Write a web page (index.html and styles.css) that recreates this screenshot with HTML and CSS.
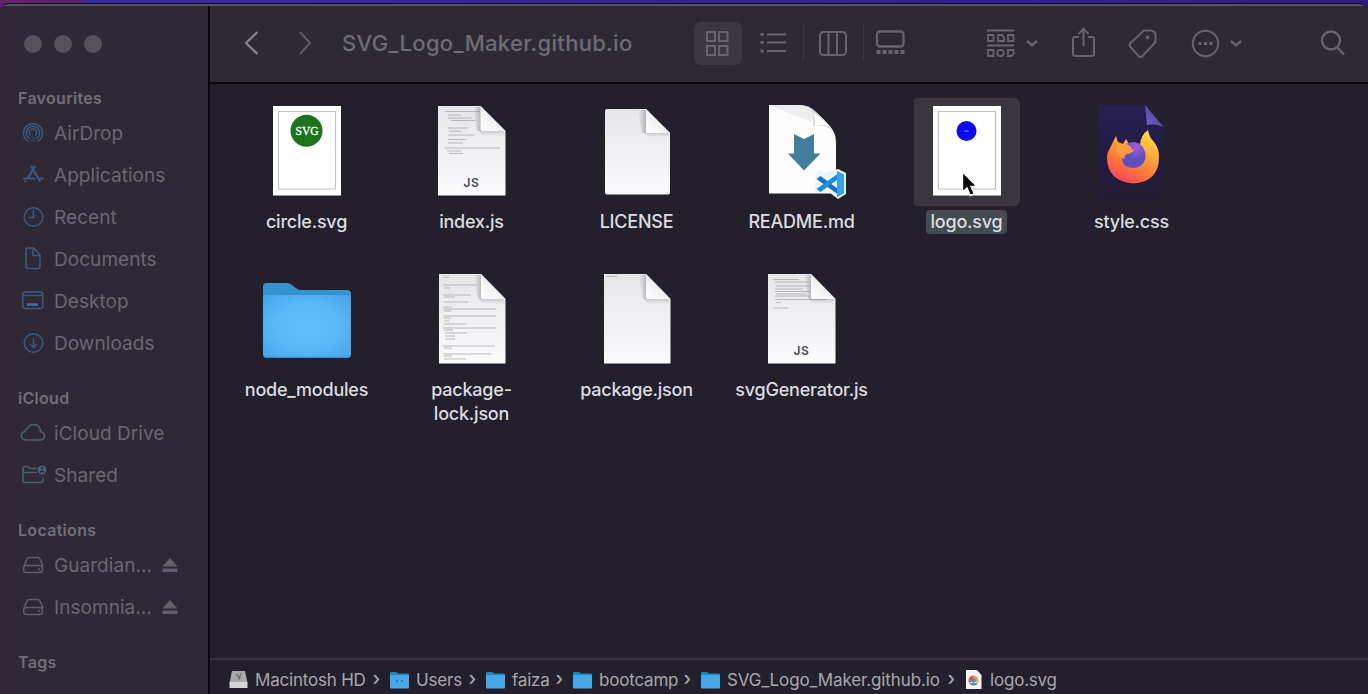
FILE: index.html
```html
<!DOCTYPE html>
<html lang="en">
<head>
<meta charset="utf-8">
<title>SVG_Logo_Maker.github.io</title>
<link rel="stylesheet" href="styles.css">
</head>
<body>
<svg class="defs" width="0" height="0" aria-hidden="true">
  <defs>
    <linearGradient id="paper" x1="0" y1="0" x2="0" y2="1"><stop offset="0" stop-color="#e6e5e9"/><stop offset=".5" stop-color="#f0f0f2"/><stop offset="1" stop-color="#fbfbfd"/></linearGradient>
    <linearGradient id="curl" x1="0" y1="1" x2=".7" y2=".3"><stop offset="0" stop-color="#fff"/><stop offset="1" stop-color="#eae9ec"/></linearGradient>
    <linearGradient id="curlShade" x1="1" y1="0" x2="0" y2="0"><stop offset="0" stop-color="#77757c" stop-opacity=".8"/><stop offset="1" stop-color="#8d8b92" stop-opacity="0"/></linearGradient>
    <linearGradient id="curlBelow" x1="0" y1="0" x2="0" y2="1"><stop offset="0" stop-color="#77757c" stop-opacity=".6"/><stop offset="1" stop-color="#8d8b92" stop-opacity="0"/></linearGradient>
    <radialGradient id="folderFront" r=".7"><stop offset="0" stop-color="#62bffb"/><stop offset=".55" stop-color="#59b8f7"/><stop offset="1" stop-color="#43a3e5"/></radialGradient>
    <linearGradient id="fox" x1=".8" y1="0" x2=".3" y2="1"><stop offset="0" stop-color="#ffe14d"/><stop offset=".4" stop-color="#ffa436"/><stop offset=".75" stop-color="#ff6b3d"/><stop offset="1" stop-color="#f6406a"/></linearGradient>
    <radialGradient id="globe" cx=".6" cy=".2"><stop offset="0" stop-color="#a35be0"/><stop offset="1" stop-color="#5c50bd"/></radialGradient>
    <linearGradient id="night" x1="0" y1="0" x2="0" y2="1"><stop offset="0" stop-color="#262052"/><stop offset=".55" stop-color="#231b46"/><stop offset="1" stop-color="#221d2e"/></linearGradient>
    <linearGradient id="flap" x1="0" y1="1" x2="1" y2="0"><stop offset="0" stop-color="#7567cc"/><stop offset="1" stop-color="#41368a"/></linearGradient>
    <symbol id="mini" viewBox="0 0 19 17"><path d="M0 1.500Q0 .5 1.500.5H6l2 1.500h9.500Q19 2 19 3v5H0z" fill="#2385bf"/><rect y="3.500" width="19" height="13.500" rx="1" fill="#46a9e6"/></symbol>
    <symbol id="drive" viewBox="22 555 22 20"><path d="M24 566l3-7q.5-1.500 2.500-1.500h8q2 0 2.500 1.500l3 7M26.500 565.500h13q3 0 3 3.500t-3 3.500h-13q-3 0-3-3.500t3-3.500z"/><path d="M38 569h2"/></symbol>
    <symbol id="eject" viewBox="0 0 16 15"><path d="M8 0l7.500 8.500H.5zM.5 10.500h15v3.500H.5z"/></symbol>
  </defs>
</svg>
<div class="window">
  <aside class="sidebar">
    <div class="lights"><i></i><i></i><i></i></div>
    <section class="group favourites">
      <h2>Favourites</h2>
      <a class="item"><svg viewBox="21 121 24 24"><path d="M28.500 141.500a9.500 9.500 0 1 1 9 0M29.500 138.500a6.600 6.600 0 1 1 7 0M31 135.500a3.600 3.600 0 1 1 4 0"/><path d="M33 133l-3.500 9h7z" class="solid"/></svg><span>AirDrop</span></a>
      <a class="item"><svg viewBox="21 163 24 24"><path d="M31 166l9.500 16M35 166l-7.500 13M25 182l.8-1.500M23 178.500h12M39 178.500h4.500" stroke-width="2.200"/></svg><span>Applications</span></a>
      <a class="item"><svg viewBox="21 205 24 24"><circle cx="33.500" cy="217" r="9.300"/><path d="M33.500 210v7.500H28.500"/></svg><span>Recent</span></a>
      <a class="item"><svg viewBox="21 247 24 24"><path d="M26 250q0-2 2-2h5.500l6.500 7v11.500q0 2-2 2H28q-2 0-2-2zM33 248v7.500h7"/></svg><span>Documents</span></a>
      <a class="item"><svg viewBox="21 289 24 24"><rect x="22.800" y="292" width="20" height="16.500" rx="2.500"/><path d="M23 295.500h19.500"/><path d="M27 304.500h11" class="bright" stroke-width="2.500"/></svg><span>Desktop</span></a>
      <a class="item"><svg viewBox="21 331 24 24"><circle cx="33.500" cy="343" r="9.300"/><path d="M33.500 338v9.500M30 344l3.500 3.500 3.500-3.500"/></svg><span>Downloads</span></a>
    </section>
    <section class="group">
      <h2>iCloud</h2>
      <a class="item teal"><svg class="wide" viewBox="20 421 26 24"><path d="M26 440h14.500q4-.5 4-4t-4-4.500q0-6-6-7-5.500-.5-7 4-2.500.5-2.500 3-4 .8-3.700 4.500.3 3.500 4.700 4z"/></svg><span>iCloud Drive</span></a>
      <a class="item teal"><svg class="wide" viewBox="20 463 26 24"><path d="M37 468.500h-7l-2-2h-3q-2 0-2 2v12q0 2 2 2h16q2 0 2-2v-3M23 472.500h14"/><circle cx="42" cy="470" r="4.500" class="head"/><path d="M42 467v2.500M40 472.500q2-3 4 0" class="face"/></svg><span>Shared</span></a>
    </section>
    <section class="group">
      <h2>Locations</h2>
      <a class="item grey"><svg viewBox="0 0 24 24"><use href="#drive" x="1" y="2" width="22" height="20"/></svg><span class="drive-name">Guardian...</span><svg class="eject"><use href="#eject"/></svg></a>
      <a class="item grey"><svg viewBox="0 0 24 24"><use href="#drive" x="1" y="2" width="22" height="20"/></svg><span class="drive-name">Insomnia...</span><svg class="eject"><use href="#eject"/></svg></a>
    </section>
    <section class="group"><h2>Tags</h2></section>
  </aside>

  <main class="main">
    <header class="toolbar">
      <svg class="back" viewBox="243 25 18 36"><path d="M257.500 32L246 43l11.500 11"/></svg>
      <svg class="forward" viewBox="297 25 18 36"><path d="M300 32l10 11-10 11"/></svg>
      <h1>SVG_Logo_Maker.github.io</h1>
      <div class="view-active"><svg viewBox="704 25 28 36"><path d="M707 32h8v9h-8zM719 32h8.500v9H719zM707 46h8v9h-8zM719 46h8.500v9H719z"/></svg></div>
      <svg class="list" viewBox="758 25 30 36"><path d="M767 34.500h19M767 42.500h19M767 51h19" stroke-width="2.200"/><path d="M760.500 34.500h3M760.500 42.500h3M760.500 51h3" stroke-width="3"/></svg>
      <i class="sep"></i>
      <svg class="columns" viewBox="817 25 32 36"><rect x="820" y="32" width="26" height="23" rx="3.500"/><path d="M828.500 32v23M837 32v23"/></svg>
      <i class="sep"></i>
      <svg class="gallery" viewBox="874 25 33 36"><rect x="877" y="31.500" width="26.500" height="15" rx="3" stroke-width="2.300"/><path d="M876.500 52h28" stroke-width="4" stroke-dasharray="4 2"/></svg>
      <svg class="arrange" viewBox="985 25 32 36"><path d="M987 30.500h27M987 45.500h27"/><path d="M988 35h5.500v6H988zM998 35h4l2 2v4h-6zM1008 35h5.500v6h-5.500zM988 50h5.500v6H988zM1008 50h5.500v4l-2 2h-3.500z"/><circle cx="1000.500" cy="53" r="3.200"/></svg>
      <svg class="chev" viewBox="1024 25 16 36"><path d="M1027 41l5 4.500 5-4.500"/></svg>
      <svg class="share" viewBox="1070 25 27 36"><path d="M1079 37h-4q-2 0-2 2v15q0 2 2 2h17q2 0 2-2V39q0-2-2-2h-4M1083.500 46V30M1078.500 34l5-5 5 5"/></svg>
      <svg class="tag" viewBox="1126 25 33 36"><path d="M1144 30.500h7q4.500 1 4.500 5v6.500l-13 14q-2 2-4 0l-8-9q-2-2 0-4z"/><circle cx="1147.500" cy="37.500" r="1" /></svg>
      <svg class="more" viewBox="1190 25 32 36"><circle cx="1205.500" cy="43.500" r="12.700"/><path d="M1198.500 43.500h3M1204 43.500h3M1209.500 43.500h3" stroke-width="3"/></svg>
      <svg class="chev chev-more" viewBox="1228 25 16 36"><path d="M1231 41l5 4.500 5-4.500"/></svg>
      <svg class="search" viewBox="1319 25 28 36"><circle cx="1331" cy="40.500" r="9"/><path d="M1337.500 47.500l6.500 7" stroke-width="2.500"/></svg>
    </header>

    <div class="files">
      <figure class="file">
        <svg viewBox="0 0 108 108"><path d="M21 8h68v89.500H21z" fill="#fff"/><path d="M26.500 13.500h57v77.500h-57z" fill="none" stroke="#c6c5c9" stroke-width="1.200"/><circle cx="54.500" cy="32.700" r="16" fill="#1e741e"/><text x="55" y="37" class="svg-badge">SVG</text></svg>
        <figcaption>circle.svg</figcaption>
      </figure>
      <figure class="file">
        <svg viewBox="0 0 108 108"><path d="M21 8h42.500l25 25v64.500H21z" fill="url(#paper)"/><path d="M28 13.500h35M31 17h13M31 20h24M34 22.500h24M31 30h20M32 33h12M31 37h26M31 41.500h18M31 45h15" class="code"/><path d="M28 50h55M30 53h14M32 55.500h14" class="code"/><path d="M56 9h8v24h-4z" fill="url(#curlShade)" opacity=".6"/><path d="M62 33h25v5H66z" fill="url(#curlBelow)" opacity=".5"/><path d="M63.500 8l25 25H66q-2.500 0-2.500-2.500z" fill="url(#curl)"/><text x="54.500" y="89" class="js">JS</text></svg>
        <figcaption>index.js</figcaption>
      </figure>
      <figure class="file">
        <svg viewBox="0 0 108 108"><path d="M25 11h39l24 24v59.500q0 2-2 2H25q-2 0-2-2v-81.500q0-2 2-2z" fill="url(#paper)"/><path d="M56 12h8v23h-4z" fill="url(#curlShade)" opacity=".6"/><path d="M62 35h25v4H66z" fill="url(#curlBelow)" opacity=".5"/><path d="M64 11l24 24H66q-2 0-2-2z" fill="url(#curl)"/></svg>
        <figcaption>LICENSE</figcaption>
      </figure>
      <figure class="file">
        <svg viewBox="0 0 108 108"><path d="M22 7h30q10 0 17 7l12 12q8 8 8 18v51.500H22z" fill="#fcfcfd"/><path d="M22 7h30q10 0 15 6l-2 11z" fill="#e7e7ea" opacity=".7"/><path d="M62 9q6 7 4 19 14-2 20 6-8-14-24-25z" fill="#d9d8dc"/><path d="M65 14q4 5 3 14 6-2 14 0-6-7-17-14z" fill="#fff"/><path d="M47 36l10 5 10-5v19.500h6.500L57 72.500 41 55.500h6z" fill="#427f9e"/><path d="M91 71l8 4v21l-8 5-13-10-5 4-5-4v-5l3-3-3-3v-4l5-4 5 3z" fill="#e9f4fb"/><path d="M69.500 81l4-3 19 14v5.500z" fill="#1474bd"/><path d="M69.500 91l4 3 19-14v-5.500z" fill="#1c8bdb"/><path d="M90 73l7 3.500v19L90 99z" fill="#37a1ef"/></svg>
        <figcaption>README.md</figcaption>
      </figure>
      <figure class="file selected">
        <svg viewBox="0 0 108 108"><path d="M21 8h68v89.500H21z" fill="#fff"/><path d="M26.500 13.500h57v77.500h-57z" fill="none" stroke="#c2c1ca" stroke-width="1.200"/><circle cx="54.500" cy="33" r="10" fill="#0a0af5"/><path d="M52.500 33h4" stroke="#6b6bff" stroke-width="1.500"/><path d="M50.500 74v20l4.500-4 3.300 7.500 4-1.800-3.300-7.200h6z" fill="#050505" stroke="#fff" stroke-width="1.400"/></svg>
        <figcaption><span>logo.svg</span></figcaption>
      </figure>
      <figure class="file">
        <svg viewBox="0 0 108 108"><path d="M22 7h46l18 21v77H22z" fill="url(#night)"/><path d="M68 7l18.500 22Q78 25 70 27z" fill="url(#flap)"/><path d="M32 52l3-6 4-8 2 6 5 2 3-5 3 5 6-1 5 1q1-9 8-14 1 7 6 12 5 6 5 15 0 25-26 26.500Q30 83 30 59q0-4 2-7z" fill="url(#fox)"/><path d="M49 46q9-5 16 2 5 6 3 14-3 8-12 8t-11-8q-1-5 2-8 5 0 8-3-2-4-6-5z" fill="url(#globe)"/><path d="M38 50q6-4 11-3 3 4 8 5-2 3-7 4-4 2-2 5-6-1-10-11z" fill="#ff9a3c"/></svg>
        <figcaption>style.css</figcaption>
      </figure>
      <figure class="file">
        <svg viewBox="0 0 108 108"><path d="M11 21q0-4 4-4h20q3 0 5 2l4 3q2 2 5 2h46q4 0 4 4v20H11z" fill="#3492cf"/><path d="M11 32q0-3 4-3h80q4 0 4 3v56q0 4-4 4H15q-4 0-4-4z" fill="url(#folderFront)"/><path d="M13 91.300h84" stroke="#3590cf" stroke-width="1.300"/></svg>
        <figcaption>node_modules</figcaption>
      </figure>
      <figure class="file">
        <svg viewBox="0 0 108 108"><path d="M22 8h42l24.500 25v64.500H22z" fill="url(#paper)"/><path d="M26 11h6M26 19h34M27 22h6M26 29h28M27 31h11M27 36h24M26 41h9M27 43h52M27 45h7M26 50h53M27 52h7M27 55h5M27 58h22M26 62h53M27 64h9M28 67h22M28 70h10M28 73h10M26 80h52M27 82h8M26 88h48M27 90h8M27 93h22" class="code"/><path d="M57 9h8v24h-4z" fill="url(#curlShade)" opacity=".6"/><path d="M62 33h25v5H66z" fill="url(#curlBelow)" opacity=".5"/><path d="M64 8l24.500 25H66q-2 0-2-2z" fill="url(#curl)"/></svg>
        <figcaption>package-<br>lock.json</figcaption>
      </figure>
      <figure class="file">
        <svg viewBox="0 0 108 108"><path d="M22 8h42l24.500 25v64.500H22z" fill="url(#paper)"/><path d="M24 10.500h11" class="code"/><path d="M57 9h8v24h-4z" fill="url(#curlShade)" opacity=".6"/><path d="M62 33h25v5H66z" fill="url(#curlBelow)" opacity=".5"/><path d="M64 8l24.500 25H66q-2 0-2-2z" fill="url(#curl)"/></svg>
        <figcaption>package.json</figcaption>
      </figure>
      <figure class="file">
        <svg viewBox="0 0 108 108"><path d="M21 8h43l24.500 25v64.500H21z" fill="url(#paper)"/><path d="M26 13.500h26M28 16h34M29 20h34M28 23h28M28 25.500h35M29 28h30M28 30h34M28 33.500h52M29 36.500h5M26 42h15" class="code"/><path d="M57 9h8v24h-4z" fill="url(#curlShade)" opacity=".6"/><path d="M62 33h25v5H66z" fill="url(#curlBelow)" opacity=".5"/><path d="M64 8l24.500 25H66q-2 0-2-2z" fill="url(#curl)"/><text x="54.500" y="89" class="js">JS</text></svg>
        <figcaption>svgGenerator.js</figcaption>
      </figure>
    </div>

    <footer class="path">
      <div class="crumb c1"><svg viewBox="0 0 19 18"><path d="M3 0h13l2.500 12H.5z" fill="#a9a8ad"/><path d="M.5 11h18v6H.5z" fill="#d5d5d9"/><path d="M7 3l4 5M12 2l-2 7" stroke="#6c6b72" stroke-width="1.300"/></svg><span>Macintosh HD</span><b>›</b></div>
      <div class="crumb c2"><svg><use href="#mini"/><path d="M7 9v2M12 9v2" stroke="#216f9f" stroke-width="1.500"/></svg><span>Users</span><b>›</b></div>
      <div class="crumb c3"><svg><use href="#mini"/></svg><span>faiza</span><b>›</b></div>
      <div class="crumb c4"><svg><use href="#mini"/></svg><span>bootcamp</span><b>›</b></div>
      <div class="crumb c5"><svg><use href="#mini"/></svg><span>SVG_Logo_Maker.github.io</span><b>›</b></div>
      <div class="crumb c6"><svg viewBox="0 0 19 19"><path d="M1 0h11l4.500 5v14H1z" fill="#f4f4f6"/><path d="M8.500 10.500V5.500A5 5 0 0 1 13 13z" fill="#e8a94b"/><path d="M8.500 10.500V5.500A5 5 0 0 0 4.200 13z" fill="#d9574e"/><path d="M4.200 13a5 5 0 0 0 8.800 0z" fill="#54a06a"/><circle cx="8.600" cy="10.500" r="2.300" fill="#4c8be0"/></svg><span>logo.svg</span></div>
    </footer>
  </main>
</div>
</body>
</html>
```
FILE: styles.css
```css
* { box-sizing: border-box; }
body {
  margin: 0;
  height: 694px;
  padding-top: 3px;
  overflow: hidden;
  background: linear-gradient(90deg, #65226b 0, #5a2372 80px, #3b2b9c 84px, #35229a 60%, #321b86 100%);
  font-family: Inter, "Liberation Sans", sans-serif;
}
.defs { position: absolute; }
.window {
  display: flex;
  height: 691px;
  border-top: 1px solid #0d0920;
  border-radius: 9px 9px 0 0;
  background: #2d2933;
  box-shadow: inset 0 2px 0 #57545f;
  overflow: hidden;
}
.sidebar {
  width: 210px;
  margin-top: 2px;
  border-right: 2px solid #080510;
  background: linear-gradient(90deg, #322736 0, #2f2935 30px, #2d2934 100%);
}
.lights { display: flex; gap: 12px; padding: 28.5px 0 0 24px; }
.lights i { width: 18px; height: 18px; border-radius: 50%; background: #55525c; }
.group { margin-bottom: 22px; }
.group.favourites { margin-top: 33.5px; }
.group h2 {
  margin: 0;
  padding-left: 18px;
  height: 24px;
  line-height: 24px;
  font-size: 16px;
  font-weight: 600;
  letter-spacing: .3px;
  color: #726e78;
}
.item {
  display: flex;
  align-items: center;
  height: 42px;
  padding-left: 21px;
  font-size: 19px;
  letter-spacing: .05px;
  color: #6b6771;
}
.group .item:first-of-type { margin-top: 2px; }
.item > svg { width: 24px; height: 24px; margin-right: 9px; fill: none; stroke: #40587b; stroke-width: 1.5; }
.item > svg.wide { width: 26px; margin: 0 8px 0 -1px; }
.item .solid { fill: #2d466f; stroke: none; opacity: .5; }
.item .bright { stroke: #426da8; }
.teal > svg { stroke: #4c6170; }
.teal .head { fill: #46637a; stroke: none; }
.teal .face { stroke: #2d2934; }
.grey > svg { stroke: #625f69; }
.drive-name { width: 98px; white-space: nowrap; }
.item > .eject { width: 16px; height: 15px; margin: 0 0 0 10px; fill: #625f69; stroke: none; }

.main { flex: 1; min-width: 0; margin-top: 2px; display: flex; flex-direction: column; background: #231f2b; }
.toolbar {
  display: flex;
  align-items: center;
  height: 78px;
  padding-bottom: 2px;
  border-bottom: 2px solid #0b0812;
  background: #2e2a34;
}
.toolbar svg { flex: none; height: 36px; fill: none; stroke: #67646e; stroke-width: 2; }
.toolbar .back { width: 18px; margin-left: 33px; stroke: #85828b; stroke-width: 2.3; }
.toolbar .forward { width: 18px; margin-left: 36px; stroke: #5d5a64; stroke-width: 2.2; }
.toolbar h1 { width: 290px; margin: 0 0 0 27px; font-size: 22px; font-weight: 500; letter-spacing: .3px; color: #6f6c76; white-space: nowrap; }
.view-active { display: flex; align-items: center; width: 48px; height: 43px; padding-left: 10px; margin-left: 62px; border-radius: 7px; background: #3c3842; }
.view-active svg { width: 28px; }
.toolbar .list { width: 30px; margin-left: 16px; }
.sep { width: 1px; height: 36px; background: #3c3943; margin-left: 15px; }
.toolbar .columns { width: 32px; margin-left: 13px; }
.columns + .sep { margin-left: 14px; }
.toolbar .gallery { width: 33px; margin-left: 10px; }
.toolbar .arrange { width: 32px; margin-left: 78px; stroke-width: 1.8; }
.toolbar .chev { width: 16px; margin-left: 7px; stroke-width: 2.4; }
.toolbar .share { width: 27px; margin-left: 30px; }
.toolbar .tag { width: 33px; margin-left: 29px; }
.toolbar .more { width: 32px; margin-left: 31px; }
.toolbar .chev-more { margin-left: 6px; }
.toolbar .search { width: 28px; margin-left: 75px; stroke-width: 2.3; }

.files {
  flex: 1;
  display: grid;
  grid-template-columns: repeat(6, 165px);
  grid-auto-rows: 168px;
  padding: 14px 0 0 13.5px;
}
.file { margin: 0; display: flex; flex-direction: column; align-items: center; }
.file > svg { width: 108px; height: 108px; border-radius: 6px; }
.file figcaption {
  margin-top: 4px;
  padding-left: 1px;
  text-align: center;
  font-size: 18px;
  line-height: 24px;
  font-weight: 500;
  letter-spacing: -.22px;
  color: #dddce0;
  white-space: nowrap;
}
.selected > svg { background: linear-gradient(#3a3640, #3a3640) 2px 0 no-repeat; }
.selected figcaption span { display: block; padding: 0 5px; border-radius: 4px; background: #434a50; }
.code { fill: none; stroke: #a5a4aa; stroke-width: 1; opacity: .75; }
.js { font-size: 12px; font-weight: 600; fill: #4d4c51; text-anchor: middle; letter-spacing: .5px; }
.svg-badge { font: 11.5px "Liberation Serif", serif; fill: #fff; stroke: #fff; stroke-width: .3; text-anchor: middle; }

.path {
  display: flex;
  align-items: center;
  height: 36px;
  padding: 5px 0 0 19px;
  border-top: 2px solid #36323e;
  font-size: 17px;
  letter-spacing: -.2px;
  color: #a9a7ae;
}
.crumb { display: flex; align-items: center; height: 22px; white-space: nowrap; }
.crumb svg { width: 19px; height: 18px; margin-right: 7px; flex: none; }
.crumb b { margin: -3px 10px 0 auto; font-size: 19px; font-weight: 500; }
.c1 { width: 161px; }
.c2 { width: 96px; }
.c3 { width: 87px; }
.c4 { width: 128px; }
.c5 { width: 264px; letter-spacing: -.12px; }
.c6 svg { height: 19px; margin-right: 6px; }
```
